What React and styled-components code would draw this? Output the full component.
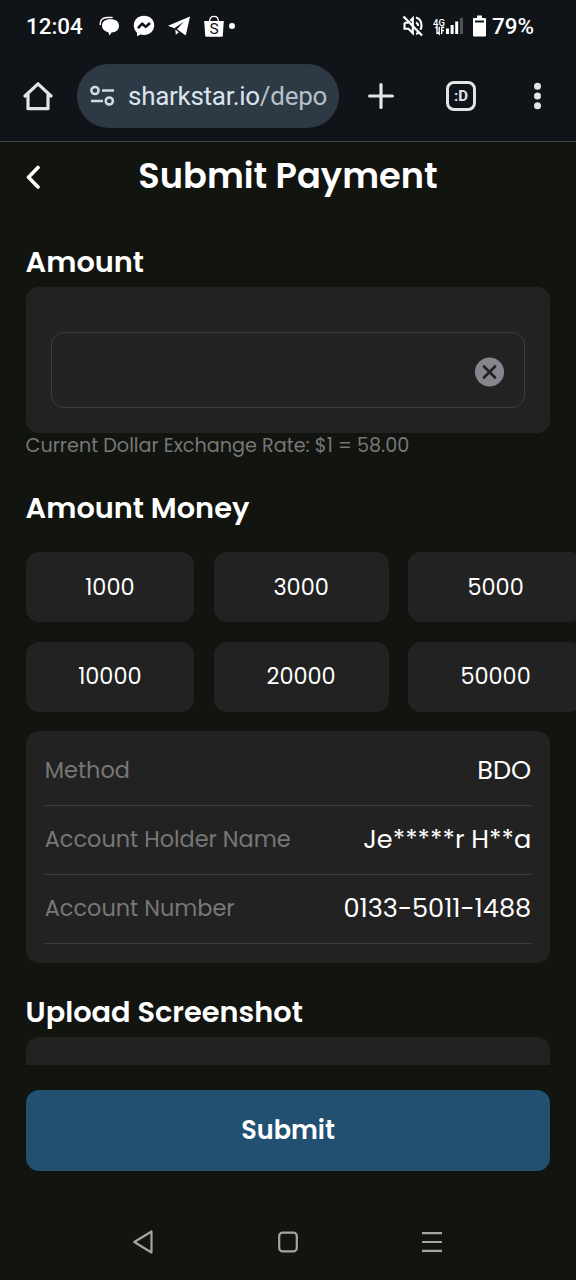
import React, { useState } from "react";
import styled, { createGlobalStyle } from "styled-components";

const amounts = ["1000", "3000", "5000", "10000", "20000", "50000"];

const details = [
  { label: "Method", value: "BDO" },
  { label: "Account Holder Name", value: "Je*****r H**a" },
  { label: "Account Number", value: "0133-5011-1488" },
];

function StatusIcons() {
  return (
    <>
      <Icon width="21" height="20" viewBox="0 0 21 20" $left="16px">
        <path d="M1.200 8.500C1 4 3.500 1.500 8.500 1.500h4.500" fill="none" stroke="#fff" strokeWidth="1.500" strokeLinecap="round" />
        <path d="M11.500 3.200c5.500 0 8.500 2.500 8.500 6.500 0 4-2.700 6.500-7.500 6.800L10.500 19.500 9.300 16.200C5.400 15.300 3 13.200 3 9.600 3 5.700 6 3.200 11.500 3.200Z" fill="#fff" />
      </Icon>
      <Icon width="22" height="22" viewBox="0 0 22 22" $left="13px">
        <path d="M11 .8C5 .8.800 5 .8 10.500c0 3 1.200 5.500 3.200 7.200v3.500l3.500-1.700c1.100.3 2.300.5 3.500.5 6 0 10.200-4.200 10.200-9.700S17 .8 11 .8Z" fill="#fff" />
        <path d="m5 13.200 4.200-4.500 3.500 3.200L17 8" fill="none" stroke="#101418" strokeWidth="2.600" strokeLinejoin="round" />
      </Icon>
      <Icon width="24" height="22" viewBox="0 0 24 22" $left="12px">
        <path d="M23 1.500 1 10.700l6.400 2.600 9.300-6.500-6.700 7.400 8.800 6.200Z" fill="#fff" />
        <path d="m8.300 14.500.5 5.200 3-2.500Z" fill="#fff" />
      </Icon>
      <Icon width="20" height="23" viewBox="0 0 20 23" $left="13px">
        <path d="M5.700 6C5.700 3 7.300 1.300 10 1.300S14.300 3 14.300 6" fill="none" stroke="#fff" strokeWidth="1.300" />
        <path d="M.2 6h19.600l-1 14.600q-.1 1.200-1.300 1.200h-15q-1.200 0-1.300-1.200Z" fill="#fff" />
        <text x="10" y="19.300" textAnchor="middle" fontFamily="Roboto, sans-serif" fontSize="15.500" fill="#101418">S</text>
      </Icon>
      <Dot />
    </>
  );
}

function MuteIcon() {
  return (
    <svg width="22" height="22" viewBox="0 0 22 22" fill="none" stroke="#fff" strokeWidth="2.100">
      <path d="M2.500 7.800v6h4l4.300 4.300V6.500M6.500 7.800h-4M8.300 5.700l2.500-2.500v6" />
      <path d="M14 7.500c1.400.7 2.200 2 2.200 3.600M14 2.600c3.500 1.100 5.500 4.300 5.500 8 0 1.500-.4 2.900-1.100 4.100M14 18.900c1-.3 1.900-.8 2.700-1.400" />
      <path d="m1.500 1.500 18.500 19" strokeWidth="2.400" />
    </svg>
  );
}

function SignalIcon() {
  return (
    <Icon width="31" height="20" viewBox="0 0 31 20" $left="9px">
      <text x="0" y="9.500" fontFamily="Roboto, sans-serif" fontSize="9.500" fontWeight="500" fill="#fff">4G</text>
      <path d="M2.300 12 4 10.700V18M6.200 10.700V18l-1.500-1.300M8.700 18v-6.700h2.600M8.700 14.500h2.200" fill="none" stroke="#fff" strokeWidth="1.400" />
      <path d="M13 12.500h3V18h-3zM17.600 9h3v9h-3zM22.200 5.500h3V18h-3z" fill="#fff" />
      <path d="M27 2h3v16h-3z" fill="#50545a" />
    </Icon>
  );
}

function BatteryIcon() {
  return (
    <Icon width="13" height="22" viewBox="0 0 13 22" $left="9px">
      <path d="M4 .5h5V3H12q1 0 1 1v16.500q0 1-1 1H1q-1 0-1-1V4q0-1 1-1h3Z" fill="#fff" />
      <path d="M2 5.500h9v2H2z" fill="#101418" />
    </Icon>
  );
}

function App() {
  const [amount, setAmount] = useState("");

  return (
    <Phone>
      <GlobalStyle />
      <StatusBar>
        <StatusText>12:04</StatusText>
        <StatusIcons />
        <Spacer />
        <MuteIcon />
        <SignalIcon />
        <BatteryIcon />
        <StatusText $left="6px">79%</StatusText>
      </StatusBar>

      <BrowserBar>
        <svg width="30" height="30" viewBox="0 0 30 30" fill="none" stroke="#e1e4e8" strokeWidth="3.200" strokeLinejoin="round" strokeLinecap="round">
          <path d="M2 15 15 2.800 28 15M5 13v14.700h20V13" />
        </svg>
        <AddressBar>
          <svg width="26" height="22" viewBox="0 0 26 22" fill="none" stroke="#d3dce5" strokeWidth="2.500">
            <circle cx="6" cy="5.500" r="3.600" />
            <circle cx="20.300" cy="16" r="3.600" />
            <path d="M13 5.500h12M2 16h12" />
          </svg>
          <Url>sharkstar.io<span>/depo</span></Url>
        </AddressBar>
        <Icon width="26" height="26" viewBox="0 0 26 26" $left="29px" stroke="#e1e4e8" strokeWidth="3.200" strokeLinecap="round">
          <path d="M13 1.600v22.800M1.600 13h22.800" />
        </Icon>
        <TabButton>:D</TabButton>
        <Icon width="8" height="28" viewBox="0 0 8 28" $left="57.5px" fill="#e1e4e8">
          <circle cx="3.500" cy="4.300" r="3.500" />
          <circle cx="3.500" cy="14" r="3.500" />
          <circle cx="3.500" cy="23.700" r="3.500" />
        </Icon>
      </BrowserBar>

      <Header>
        <svg width="16" height="24" viewBox="0 0 16 24" fill="none" stroke="#fff" strokeWidth="3.600" strokeLinecap="round" strokeLinejoin="round">
          <path d="M13 2.500 3.500 12.200 13 22" />
        </svg>
        <PageTitle>Submit Payment</PageTitle>
      </Header>

      <Content>
        <SectionTitle>Amount</SectionTitle>
        <AmountCard>
          <InputBox>
            <Input value={amount} onChange={(e) => setAmount(e.target.value)} />
            <ClearButton onClick={() => setAmount("")}>
              <svg width="30" height="30" viewBox="0 0 30 30">
                <circle cx="14.500" cy="15" r="14.600" fill="#85858d" />
                <path d="m9 9.500 11 11M20 9.500l-11 11" stroke="#222" strokeWidth="2.600" strokeLinecap="round" />
              </svg>
            </ClearButton>
          </InputBox>
        </AmountCard>
        <Rate>Current Dollar Exchange Rate: $1 = 58.00</Rate>

        <SectionTitle $top="31px">Amount Money</SectionTitle>
        <AmountGrid>
          {amounts.map((item) => (
            <AmountButton key={item} onClick={() => setAmount(item)}>{item}</AmountButton>
          ))}
        </AmountGrid>

        <DetailCard>
          {details.map((row) => (
            <DetailRow key={row.label}>
              <DetailLabel>{row.label}</DetailLabel>
              <DetailValue>{row.value}</DetailValue>
            </DetailRow>
          ))}
        </DetailCard>

        <SectionTitle $top="31px">Upload Screenshot</SectionTitle>
        <UploadCard />
      </Content>

      <Footer>
        <SubmitBtn>Submit</SubmitBtn>
      </Footer>

      <NavBar>
        <svg width="24" height="26" viewBox="0 0 24 26" fill="none" stroke="#a3a59f" strokeWidth="2.200" strokeLinejoin="round">
          <path d="M19.500 2.500v21L2.300 13Z" />
        </svg>
        <svg width="24" height="26" viewBox="0 0 24 26" fill="none" stroke="#a3a59f" strokeWidth="2.200">
          <rect x="3.200" y="3.600" width="17.600" height="18.800" rx="3.500" />
        </svg>
        <svg width="24" height="26" viewBox="0 0 24 26" fill="none" stroke="#a3a59f" strokeWidth="2.200">
          <path d="M2 4.200h20M2 13h20M2 21.800h20" />
        </svg>
      </NavBar>
    </Phone>
  );
}

const GlobalStyle = createGlobalStyle`
  * {
    box-sizing: border-box;
  }
  body {
    margin: 0;
    background-color: #11140f;
    font-family: Poppins, Inter, "Liberation Sans", sans-serif;
  }
  svg {
    display: block;
    flex: none;
  }
`;

const Phone = styled.div`
  display: flex;
  flex-direction: column;
  width: 576px;
  height: 1280px;
  overflow: hidden;
  background-color: #11140f;
  color: white;
`;

const StatusBar = styled.div`
  display: flex;
  align-items: center;
  flex: none;
  height: 52px;
  padding: 0 42px 0 26px;
  background-color: #101418;
`;

const StatusText = styled.span`
  font-family: Roboto, sans-serif;
  font-size: 22.4px;
  font-weight: 500;
  line-height: 26px;
  margin-left: ${({ $left }) => $left || 0};
`;

const Icon = styled.svg`
  margin-left: ${({ $left }) => $left};
`;

const Dot = styled.div`
  width: 6px;
  height: 6px;
  margin-left: 5px;
  border-radius: 50%;
  background-color: white;
`;

const Spacer = styled.div`
  flex: 1;
`;

const BrowserBar = styled.div`
  display: flex;
  align-items: center;
  flex: none;
  height: 90px;
  padding: 0 0 2px 23px;
  background-color: #101418;
  border-bottom: 1px solid #43464c;
`;

const AddressBar = styled.div`
  display: flex;
  align-items: center;
  width: 262px;
  height: 64px;
  margin-left: 24px;
  padding-left: 12px;
  border-radius: 32px;
  background-color: #2d3a45;
`;

const Url = styled.div`
  margin-left: 13px;
  font-family: Roboto, sans-serif;
  font-size: 26px;
  letter-spacing: -0.28px;
  white-space: nowrap;
  color: #dbe4ed;
  span {
    color: #b5c0ca;
  }
`;

const TabButton = styled.button`
  width: 30px;
  height: 30px;
  margin-left: 52px;
  padding: 0;
  border: 3.2px solid #e1e4e8;
  border-radius: 8px;
  background: none;
  color: #e1e4e8;
  font-family: Roboto, sans-serif;
  font-size: 15px;
  font-weight: 700;
`;

const Header = styled.div`
  display: grid;
  grid-template-columns: 16px 1fr 16px;
  align-items: center;
  flex: none;
  height: 69px;
  padding: 0 25px;
`;

const PageTitle = styled.h1`
  margin: 0;
  padding-bottom: 3px;
  font-size: 35.2px;
  font-weight: 600;
  text-align: center;
`;

const Content = styled.div`
  flex: none;
  height: 854px;
  padding: 33px 0 0 25.6px;
  overflow: hidden;
`;

const SectionTitle = styled.h2`
  margin: ${({ $top }) => $top || 0} 0 0;
  height: 43px;
  font-size: 28.8px;
  font-weight: 600;
  line-height: 36px;
`;

const AmountCard = styled.div`
  width: 524.8px;
  height: 146px;
  padding: 45px 25.6px 25px;
  border-radius: 13px;
  background-color: #222;
`;

const InputBox = styled.div`
  display: flex;
  align-items: center;
  height: 76px;
  padding: 4px 19px 0 19px;
  border: 1.6px solid #3d3d3d;
  border-radius: 13px;
`;

const Input = styled.input`
  flex: 1;
  min-width: 0;
  border: none;
  outline: none;
  background: none;
  color: white;
  font-family: inherit;
  font-size: 25px;
`;

const ClearButton = styled.button`
  padding: 0;
  border: none;
  background: none;
  cursor: pointer;
`;

const Rate = styled.p`
  margin: 0;
  height: 26px;
  font-size: 19.2px;
  line-height: 26px;
  color: #777;
  white-space: nowrap;
`;

const AmountGrid = styled.div`
  display: grid;
  grid-template-columns: 168.5px 175px 175px;
  grid-auto-rows: 70px;
  gap: 19.5px;
  margin-top: 19px;
`;

const AmountButton = styled.button`
  padding: 0 0 1px;
  border: none;
  border-radius: 13px;
  background-color: #222;
  color: white;
  font-family: inherit;
  font-size: 22.4px;
  cursor: pointer;
`;

const DetailCard = styled.div`
  width: 524.8px;
  height: 232px;
  margin-top: 19.5px;
  padding: 6px 19.2px 0;
  border-radius: 13px;
  background-color: #222;
`;

const DetailRow = styled.div`
  display: flex;
  align-items: center;
  justify-content: space-between;
  height: 69px;
  padding-bottom: 1px;
  border-bottom: 1px solid #3d3d3d;
`;

const DetailLabel = styled.span`
  padding-bottom: 2px;
  font-size: 22.4px;
  color: #777;
`;

const DetailValue = styled.span`
  font-size: 25.6px;
`;

const UploadCard = styled.div`
  width: 524.8px;
  height: 146px;
  border-radius: 13px;
  background-color: #222;
`;

const Footer = styled.div`
  flex: none;
  height: 139px;
  padding: 25px 25.6px 0;
`;

const SubmitBtn = styled.button`
  width: 100%;
  height: 81px;
  padding: 0 0 1px;
  border: none;
  border-radius: 13px;
  background-color: #215071;
  color: white;
  font-family: inherit;
  font-size: 25.6px;
  font-weight: 600;
  cursor: pointer;
`;

const NavBar = styled.div`
  display: flex;
  align-items: center;
  justify-content: space-between;
  height: 76px;
  padding: 0 132px;
`;

export default App;
